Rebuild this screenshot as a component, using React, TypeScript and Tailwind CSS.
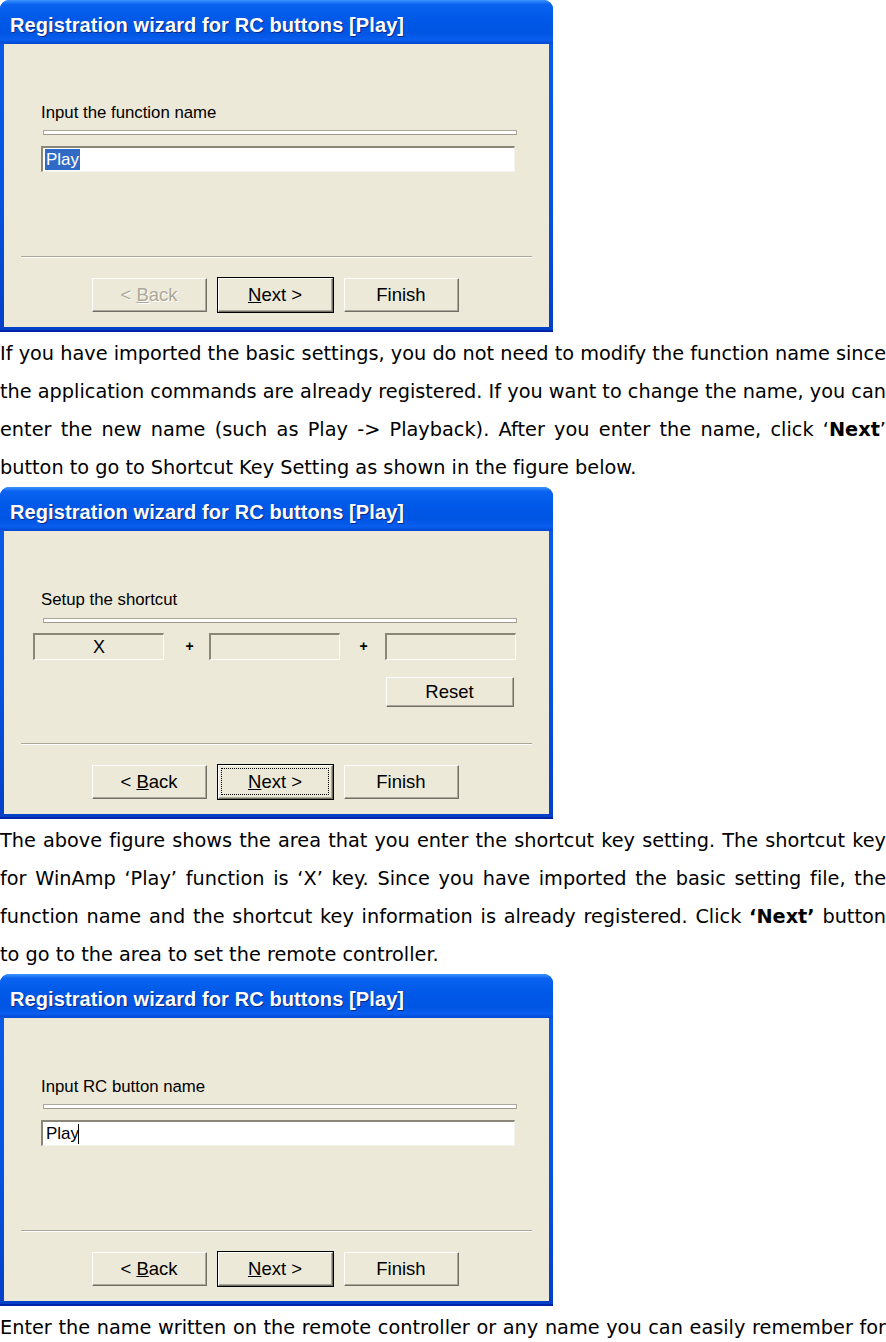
import React from 'react';

const face = 'bg-[#ECE9D8]';
const uiFont = { fontFamily: '"Liberation Sans", Arial, sans-serif' };

function WinButton({
  children,
  isDefault = false,
  focused = false,
  disabled = false,
  className = '',
}: {
  children: React.ReactNode;
  isDefault?: boolean;
  focused?: boolean;
  disabled?: boolean;
  className?: string;
}) {
  return (
    <div
      className={`${isDefault ? 'border border-black' : 'border border-transparent'} ${className}`}
    >
      <div className="h-full border-t border-l border-white border-r border-b border-r-[#716F64] border-b-[#716F64]">
        <div className={`h-full p-[2px] border-r border-b border-[#ACA899] ${face}`}>
          <div
            className={`h-full flex items-center justify-center border border-dotted ${
              focused ? 'border-black' : 'border-transparent'
            }`}
          >
            <span
              className={`text-[18.5px] leading-[20px] ${
                disabled ? 'text-[#ACA899] [text-shadow:1px_1px_0_#ffffff]' : 'text-black'
              }`}
            >
              {children}
            </span>
          </div>
        </div>
      </div>
    </div>
  );
}

function Dialog({ children, backDisabled = false, nextFocused = false }: {
  children: React.ReactNode;
  backDisabled?: boolean;
  nextFocused?: boolean;
}) {
  return (
    <div className="h-[335px]">
      <div
        className="w-[553px] h-[332px] flex flex-col rounded-t-[9px] bg-[linear-gradient(to_bottom,#0a5ce8,#0653e0_60%,#0340c8)] border-b-[2px] border-b-[#0025a8]"
        style={uiFont}
      >
        <div className="h-[44px] shrink-0 flex items-center pt-[5px] px-[10px] rounded-t-[9px] bg-[linear-gradient(to_bottom,#3d95ff_0%,#0a62f0_10%,#0058e8_45%,#0055e3_75%,#0a5eee_90%,#0048d2_100%)]">
          <span className="text-white font-bold text-[20px] tracking-[0.1px] [text-shadow:1px_1px_0_#0a2a8a]">
            Registration wizard for RC buttons [Play]
          </span>
        </div>
        <div className={`flex-1 mx-[4px] mb-[3px] flex flex-col ${face}`}>
          <div className="flex-1 flex flex-col">{children}</div>
          <div className="mx-[17px] h-[2px] border-t border-[#ACA899] border-b border-b-white" />
          <div className="mt-[19px] mb-[14px] flex pl-[87px] gap-[9px]">
            <WinButton disabled={backDisabled} className="w-[117px] h-[36px]">
              &lt; <span className="underline">B</span>ack
            </WinButton>
            <WinButton isDefault focused={nextFocused} className="w-[117px] h-[36px]">
              <span className="underline">N</span>ext &gt;
            </WinButton>
            <WinButton className="w-[117px] h-[36px]">Finish</WinButton>
          </div>
        </div>
      </div>
    </div>
  );
}

function Groove() {
  return (
    <div className="ml-[39px] w-[474px] h-[5px] border border-[#ACA899] border-b-[#9d9a8a] bg-white" />
  );
}

function NameStep({ label, selected }: { label: string; selected: boolean }) {
  return (
    <div className="flex flex-col pt-[60px]">
      <div className="pl-[37px] text-[16.8px] leading-[18px] text-black">{label}</div>
      <div className="mt-[8px]">
        <Groove />
      </div>
      <div className="mt-[11px] ml-[37px] w-[474px] h-[26px] border-t-2 border-l-2 border-[#8a8778] border-b border-r border-b-[#f4f3ee] border-r-[#f4f3ee] bg-white flex items-center pl-[2px]">
        {selected ? (
          <span className="bg-[#316AC5] text-white text-[17px] leading-[21px] px-[1px]">Play</span>
        ) : (
          <span className="flex items-center text-black text-[17px] leading-[21px] px-[1px]">
            Play<span className="inline-block w-[1px] h-[20px] bg-black -ml-[1px]" />
          </span>
        )}
      </div>
    </div>
  );
}

function KeyBox({ value }: { value?: string }) {
  return (
    <div className="w-[131px] h-[27px] border-t-2 border-l-2 border-[#8a8778] border-b border-r border-b-white border-r-white flex items-center justify-center text-[18px] text-black">
      {value}
    </div>
  );
}

function ShortcutStep() {
  return (
    <div className="flex flex-col pt-[60px]">
      <div className="pl-[37px] text-[16.8px] leading-[18px] text-black">Setup the shortcut</div>
      <div className="mt-[9px]">
        <Groove />
      </div>
      <div className="mt-[10px] ml-[29px] flex items-center">
        <KeyBox value="X" />
        <span className="w-[45px] pl-[6px] text-center font-bold text-[14px] text-black">+</span>
        <KeyBox />
        <span className="w-[45px] pl-[2px] text-center font-bold text-[14px] text-black">+</span>
        <KeyBox />
      </div>
      <div className="mt-[16px] ml-[381px]">
        <WinButton className="w-[130px] h-[32px]">Reset</WinButton>
      </div>
    </div>
  );
}

const para = 'text-[19.3px] leading-[38px] text-justify text-black [font-variant-ligatures:none]';

export default function App() {
  return (
    <div className="w-[886px] bg-white text-black" style={{ fontFamily: '"DejaVu Sans", Verdana, sans-serif' }}>
      <Dialog backDisabled>
        <NameStep label="Input the function name" selected />
      </Dialog>
      <p className={para}>
        If you have imported the basic settings, you do not need to modify the function name since the
        application commands are already registered. If you want to change the name, you can enter the new
        name (such as Play -&gt; Playback). After you enter the name, click ‘<b>Next</b>’ button to go to
        Shortcut Key Setting as shown in the figure below.
      </p>
      <Dialog nextFocused>
        <ShortcutStep />
      </Dialog>
      <p className={para}>
        The above figure shows the area that you enter the shortcut key setting. The shortcut key for WinAmp
        ‘Play’ function is ‘X’ key. Since you have imported the basic setting file, the function name and the
        shortcut key information is already registered. Click <b>‘Next’</b> button to go to the area to set the
        remote controller.
      </p>
      <Dialog>
        <NameStep label="Input RC button name" selected={false} />
      </Dialog>
      <p className={`${para} [text-align-last:justify]`}>
        Enter the name written on the remote controller or any name you can easily remember for
      </p>
    </div>
  );
}
